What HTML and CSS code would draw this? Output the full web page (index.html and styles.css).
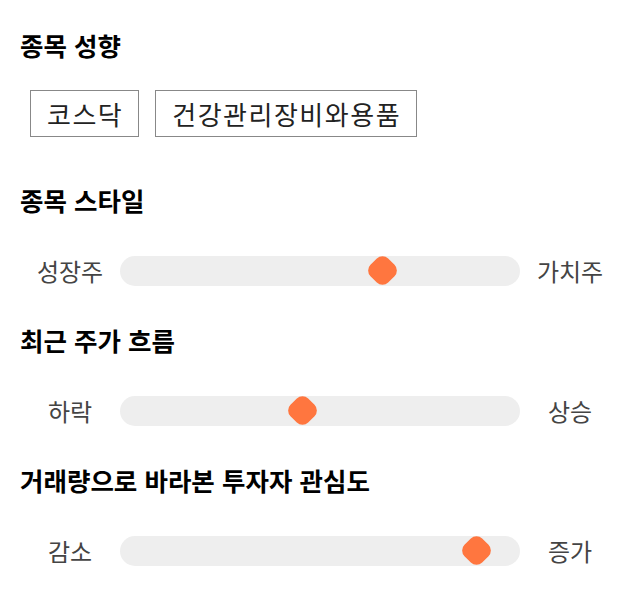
FILE: index.html
```html
<!DOCTYPE html>
<html lang="ko">
<head>
<meta charset="utf-8">
<link rel="stylesheet" href="styles.css">
</head>
<body>
<main class="page">
  <section class="block">
    <h2 class="title">종목 성향</h2>
    <div class="tags">
      <span class="tag">코스닥</span>
      <span class="tag">건강관리장비와용품</span>
    </div>
  </section>

  <section class="block block-first-slider">
    <h2 class="title">종목 스타일</h2>
    <div class="slider">
      <span class="label">성장주</span>
      <div class="track"><span class="thumb" style="left: 65.5%"></span></div>
      <span class="label">가치주</span>
    </div>
  </section>

  <section class="block">
    <h2 class="title">최근 주가 흐름</h2>
    <div class="slider">
      <span class="label">하락</span>
      <div class="track"><span class="thumb" style="left: 45.5%"></span></div>
      <span class="label">상승</span>
    </div>
  </section>

  <section class="block">
    <h2 class="title">거래량으로 바라본 투자자 관심도</h2>
    <div class="slider">
      <span class="label">감소</span>
      <div class="track"><span class="thumb" style="left: 89%"></span></div>
      <span class="label">증가</span>
    </div>
  </section>
</main>
</body>
</html>
```

FILE: styles.css
```css
* { box-sizing: border-box; }
html, body {
  margin: 0;
  padding: 0;
  background: #fff;
}
body {
  font-family: "Noto Sans CJK KR", "Noto Sans", sans-serif;
  color: #111;
}
.page {
  width: 640px;
  padding: 28px 20px 0 20px;
  display: flex;
  flex-direction: column;
}
.block {
  display: flex;
  flex-direction: column;
}
.block + .block { margin-top: 37.5px; }
.block + .block-first-slider { margin-top: 46px; }
.title {
  margin: 0;
  font-size: 25.5px;
  line-height: 33px;
  font-weight: 700;
  color: #000;
}
.tags {
  display: flex;
  gap: 16px;
  margin-top: 29px;
  padding-left: 10px;
}
.tag {
  border: 1px solid #888;
  font-size: 26px;
  line-height: 27px;
  letter-spacing: 1.5px;
  padding: 9px 15px 9px 16px;
  color: #222;
}
.slider {
  display: grid;
  grid-template-columns: 100px 400px 100px;
  align-items: center;
  margin-top: 39.5px;
  height: 30px;
}
.label {
  text-align: center;
  font-size: 24px;
  line-height: 30px;
  color: #444;
}
.track {
  position: relative;
  height: 30px;
  background: #eee;
  border-radius: 15px;
}
.thumb {
  position: absolute;
  top: 50%;
  width: 25px;
  height: 25px;
  margin-left: -12.5px;
  margin-top: -12.5px;
  background: #ff763f;
  border-radius: 8px;
  transform: rotate(45deg);
}
```
